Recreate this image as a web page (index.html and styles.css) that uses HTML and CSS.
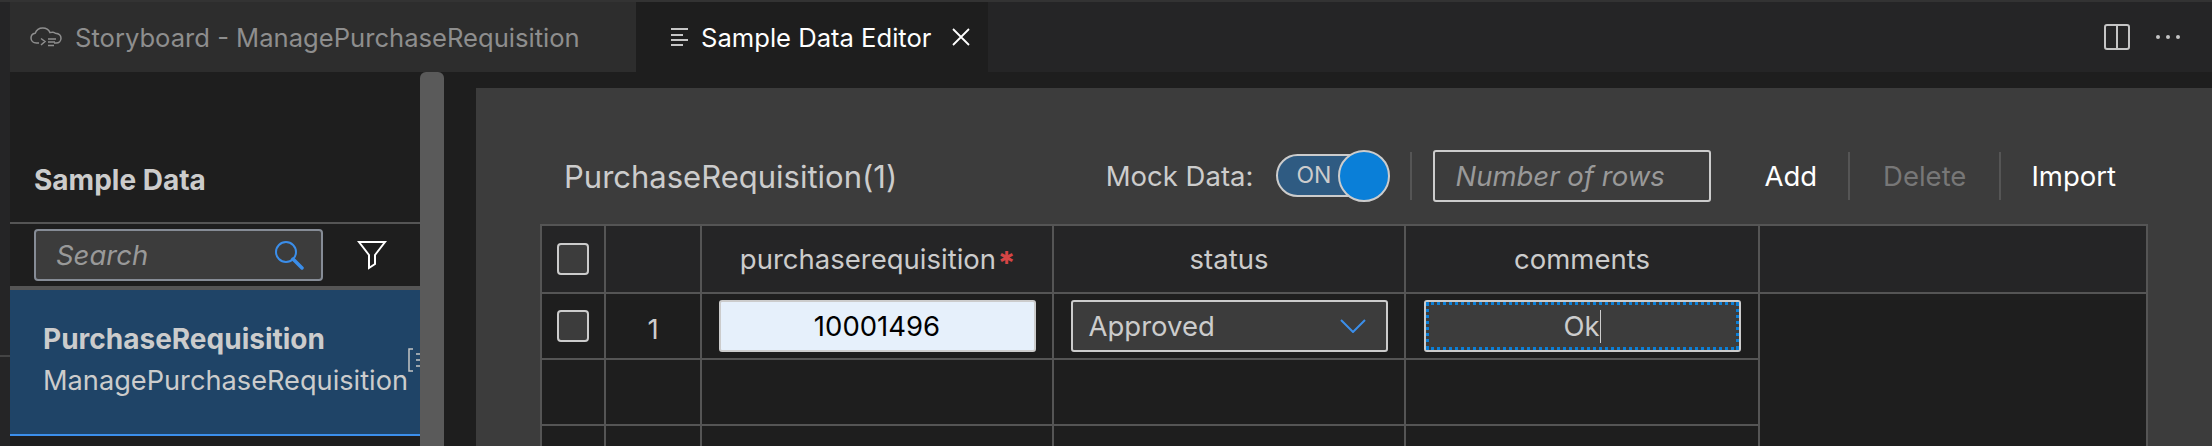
FILE: index.html
```html
<!DOCTYPE html>
<html lang="en">

<head>
    <meta charset="UTF-8">
    <title>Sample Data Editor</title>
    <link rel="stylesheet" href="styles.css">
</head>

<body>
    <div class="tabs">
        <div class="tab tab-storyboard">
            <svg class="tab-cloud" width="32" height="20" viewBox="0 0 32 20" fill="none" stroke="#8e8e8e" stroke-width="1.5">
                <path d="M9 16H6.5C3 16 1 13.6 1 11c0-2.4 1.6-4.4 4.2-4.8C6.4 2.8 9.600 1 12.800 1c3.400 0 6 1.900 7.200 4.600 1-.4 2-.5 3-.4 1 .1 1.800.5 2.400 1.100C28.900 6.600 31 8.700 31 11.300c0 2.600-2 4.700-4.800 4.700H24"/>
                <path d="M11 11.500l4 3-4 3.500M18 12h8M18 15h7M18 18.500h6"/>
            </svg>
            <span>Storyboard - ManagePurchaseRequisition</span>
        </div>
        <div class="tab tab-active">
            <svg width="17" height="18" viewBox="0 0 17 18" fill="none" stroke="#c5c5c5" stroke-width="2">
                <path d="M0 1h17M0 7h12M0 12h17M0 17h12"/>
            </svg>
            <span class="tab-title">Sample Data Editor</span>
            <svg width="18" height="18" viewBox="0 0 18 18" fill="none" stroke="#fff" stroke-width="1.800">
                <path d="M1 1l16 16M17 1L1 17"/>
            </svg>
        </div>
        <div class="tab-actions">
            <svg width="26" height="26" viewBox="0 0 26 26" fill="none" stroke="#c5c5c5" stroke-width="2">
                <rect x="1" y="1" width="24" height="24" rx="2"/>
                <path d="M13 1v24"/>
            </svg>
            <svg width="26" height="4" viewBox="0 0 26 4" fill="#c5c5c5">
                <circle cx="3" cy="2" r="2"/>
                <circle cx="13" cy="2" r="2"/>
                <circle cx="23" cy="2" r="2"/>
            </svg>
        </div>
    </div>

    <div class="main">
        <div class="gutter"><div class="gutter-line"></div></div>

        <div class="sidebar">
            <div class="side-head">Sample Data</div>
            <div class="side-search">
                <div class="search-box">
                    <input class="search-input" placeholder="Search">
                    <svg width="30" height="30" viewBox="0 0 30 30" fill="none" stroke="#3b8eea">
                        <circle cx="12" cy="12" r="10" stroke-width="2"/>
                        <path d="M19 19l9 9" stroke-width="3.500" stroke-linecap="round"/>
                    </svg>
                </div>
                <svg class="filter" width="30" height="30" viewBox="0 0 30 30" fill="none" stroke="#fff" stroke-width="2">
                    <path d="M2 2h26L18 15v9l-6 4V15z"/>
                </svg>
            </div>
            <div class="side-item">
                <div class="item-text">
                    <div class="item-name">PurchaseRequisition</div>
                    <div class="item-service">ManagePurchaseRequisition</div>
                </div>
                <svg class="item-icon" width="24" height="24" viewBox="0 0 24 24" fill="none" stroke="#c5c5c5" stroke-width="1.500">
                    <path d="M5 1H1v22h4M8 6h10M8 12h10M8 18h10"/>
                </svg>
            </div>
        </div>

        <div class="scrollbar"></div>

        <div class="panel">
            <div class="toolbar">
                <div class="panel-title">PurchaseRequisition(1)</div>
                <span class="mock-label">Mock Data:</span>
                <div class="toggle">
                    <div class="toggle-track">ON</div>
                    <div class="toggle-knob"></div>
                </div>
                <div class="divider divider-first"></div>
                <input class="rows-input" placeholder="Number of rows">
                <span class="tool-btn tool-add">Add</span>
                <div class="divider"></div>
                <span class="tool-btn tool-off">Delete</span>
                <div class="divider"></div>
                <span class="tool-btn">Import</span>
            </div>

            <table class="grid">
                <colgroup>
                    <col class="col-check">
                    <col class="col-num">
                    <col class="col-field">
                    <col class="col-field">
                    <col class="col-wide">
                    <col class="col-rest">
                </colgroup>
                <tr class="head-row">
                    <th><div class="check"></div></th>
                    <th></th>
                    <th>purchaserequisition<span class="req">✱</span></th>
                    <th>status</th>
                    <th>comments</th>
                    <th></th>
                </tr>
                <tr>
                    <td><div class="check"></div></td>
                    <td class="row-num">1</td>
                    <td><input class="cell-box cell-key" value="10001496"></td>
                    <td>
                        <div class="cell-box cell-select">
                            <span>Approved</span>
                            <svg width="26" height="14" viewBox="0 0 26 14" fill="none" stroke="#3b8eea" stroke-width="2">
                                <path d="M1 1l12 12L25 1"/>
                            </svg>
                        </div>
                    </td>
                    <td>
                        <div class="cell-box cell-focus"><span class="focus-text">Ok</span><span class="caret"></span></div>
                    </td>
                    <td class="rest" rowspan="3"></td>
                </tr>
                <tr>
                    <td></td><td></td><td></td><td></td><td></td>
                </tr>
                <tr>
                    <td></td><td></td><td></td><td></td><td></td>
                </tr>
            </table>
        </div>
    </div>
</body>

</html>
```

FILE: styles.css
```css
*{
    margin:0;
    padding:0;
    box-sizing:border-box;
}
html{
    height:446px;
    overflow:hidden;
}
body{
    height:446px;
    overflow:hidden;
    background-color:#1e1e1e;
    border-top:2px solid #333;
    font-family:Inter,"Liberation Sans",sans-serif;
    color:#ccc;
}
input{
    font-family:inherit;
    outline:none;
}

/* tabs */
.tabs{
    display:flex;
    height:70px;
    padding-left:10px;
    background-color:#252526;
    font-size:25.6px;
}
.tab{
    display:flex;
    align-items:center;
    height:100%;
}
.tab-storyboard{
    width:626px;
    padding-left:20px;
    background-color:#2d2d2d;
    color:#8e8e8e;
}
.tab-cloud{
    margin-right:13px;
}
.tab-active{
    width:352px;
    padding-left:35px;
    background-color:#1e1e1e;
    color:#fff;
}
.tab-title{
    width:251px;
    margin-left:13px;
}
.tab-actions{
    display:flex;
    align-items:center;
    gap:25px;
    margin-left:auto;
    padding-right:31px;
}

/* main area */
.main{
    display:flex;
    height:374px;
}
.gutter{
    width:10px;
    background-color:#252526;
    padding-top:283px;
}
.gutter-line{
    height:2px;
    background-color:#444;
}
.sidebar{
    width:410px;
    overflow:hidden;
}
.side-head{
    display:flex;
    align-items:flex-end;
    height:152px;
    padding:0 0 26px 24px;
    border-bottom:2px solid #555;
    font-size:28px;
    line-height:32px;
    font-weight:700;
}
.side-search{
    display:flex;
    align-items:center;
    height:66px;
    padding-left:24px;
    border-bottom:4px solid #555;
}
.search-box{
    display:flex;
    align-items:center;
    width:289px;
    height:52px;
    padding:0 17px 0 20px;
    background-color:#3c3c3c;
    border:2px solid #868c96;
    border-radius:4px;
}
.search-input{
    flex:1;
    min-width:0;
    background:transparent;
    border:0;
    font-size:27.5px;
    font-style:italic;
}
.search-input::placeholder,
.rows-input::placeholder{
    color:#999;
    opacity:1;
}
.filter{
    margin-left:34px;
}
.side-item{
    display:flex;
    align-items:center;
    height:146px;
    padding:0 0 4px 33px;
    background-color:#1f4467;
    border-bottom:2px solid #3b8eea;
}
.item-text{
    flex-shrink:0;
    width:365px;
    font-size:27.2px;
    line-height:41px;
    white-space:nowrap;
}
.item-name{
    font-size:28px;
    font-weight:700;
}
.item-icon{
    flex-shrink:0;
}
.scrollbar{
    width:24px;
    background-color:#5a5a5a;
    border-radius:6px 6px 0 0;
}

/* panel */
.panel{
    flex:1;
    margin:16px 0 0 32px;
    padding-left:64px;
    background-color:#3c3c3c;
    overflow:hidden;
}
.toolbar{
    display:flex;
    align-items:center;
    height:136px;
    padding:40px 96px 0 24px;
    font-size:27.5px;
}
.panel-title{
    flex:1;
    font-size:31px;
}
.toggle{
    position:relative;
    width:114px;
    height:52px;
    margin-left:23px;
}
.toggle-track{
    width:100px;
    height:43px;
    margin-top:4px;
    padding-left:18px;
    background-color:#2f5b82;
    border:2px solid #ccc;
    border-radius:22px;
    font-size:23px;
    line-height:39px;
}
.toggle-knob{
    position:absolute;
    top:0;
    right:0;
    width:52px;
    height:52px;
    background-color:#0a7fd8;
    border:2px solid #ccc;
    border-radius:50%;
}
.divider{
    width:2px;
    height:48px;
    background-color:#555;
}
.divider-first{
    margin-left:20px;
}
.rows-input{
    width:278px;
    height:52px;
    margin-left:21px;
    padding-left:20px;
    background:transparent;
    border:2px solid #ccc;
    border-radius:3px;
    font-size:27.5px;
    font-style:italic;
    color:#ccc;
}
.tool-btn{
    margin:0 33px;
    color:#fff;
}
.tool-btn:last-child{
    margin:0 0 0 30px;
}
.tool-add{
    margin:0 31px 0 53px;
}
.tool-off{
    color:#777;
}

/* table */
.grid{
    width:1608px;
    table-layout:fixed;
    border-spacing:0;
    border-top:2px solid #555;
    border-left:2px solid #555;
    font-size:27.5px;
}
.col-check{
    width:64px;
}
.col-num{
    width:96px;
}
.col-field{
    width:352px;
}
.col-wide{
    width:354px;
}
.col-rest{
    width:388px;
}
.grid th,
.grid td{
    height:66px;
    border-right:2px solid #555;
    border-bottom:2px solid #555;
    background-color:#1e1e1e;
    text-align:center;
    vertical-align:middle;
}
.grid th{
    height:68px;
    font-weight:400;
    background-color:#252526;
}
.grid td.rest{
    border-bottom:0;
}
.req{
    color:#d64545;
    margin-left:3px;
    font-size:18px;
    font-weight:700;
    vertical-align:5px;
    font-family:"DejaVu Sans",sans-serif;
}
.check{
    width:32px;
    height:32px;
    margin-left:15px;
    background-color:#3c3c3c;
    border:2px solid #ccc;
    border-radius:4px;
}
.row-num{
    padding-top:6px;
}
.cell-box{
    display:flex;
    align-items:center;
    height:52px;
    margin:0 auto;
    background-color:#3c3c3c;
    border:2px solid #ccc;
    border-radius:3px;
    font-size:27.5px;
    color:#ccc;
}
.grid td > .cell-box{
    width:317px;
}
.cell-key{
    background-color:#e6f0fb;
    color:#000;
    text-align:center;
}
.cell-select{
    justify-content:space-between;
    padding:0 20px 0 16px;
}
.cell-focus{
    justify-content:center;
    outline:3px dotted #0a7fd8;
    outline-offset:-5px;
}
.caret{
    width:1px;
    height:33px;
    background-color:#ccc;
}
```
